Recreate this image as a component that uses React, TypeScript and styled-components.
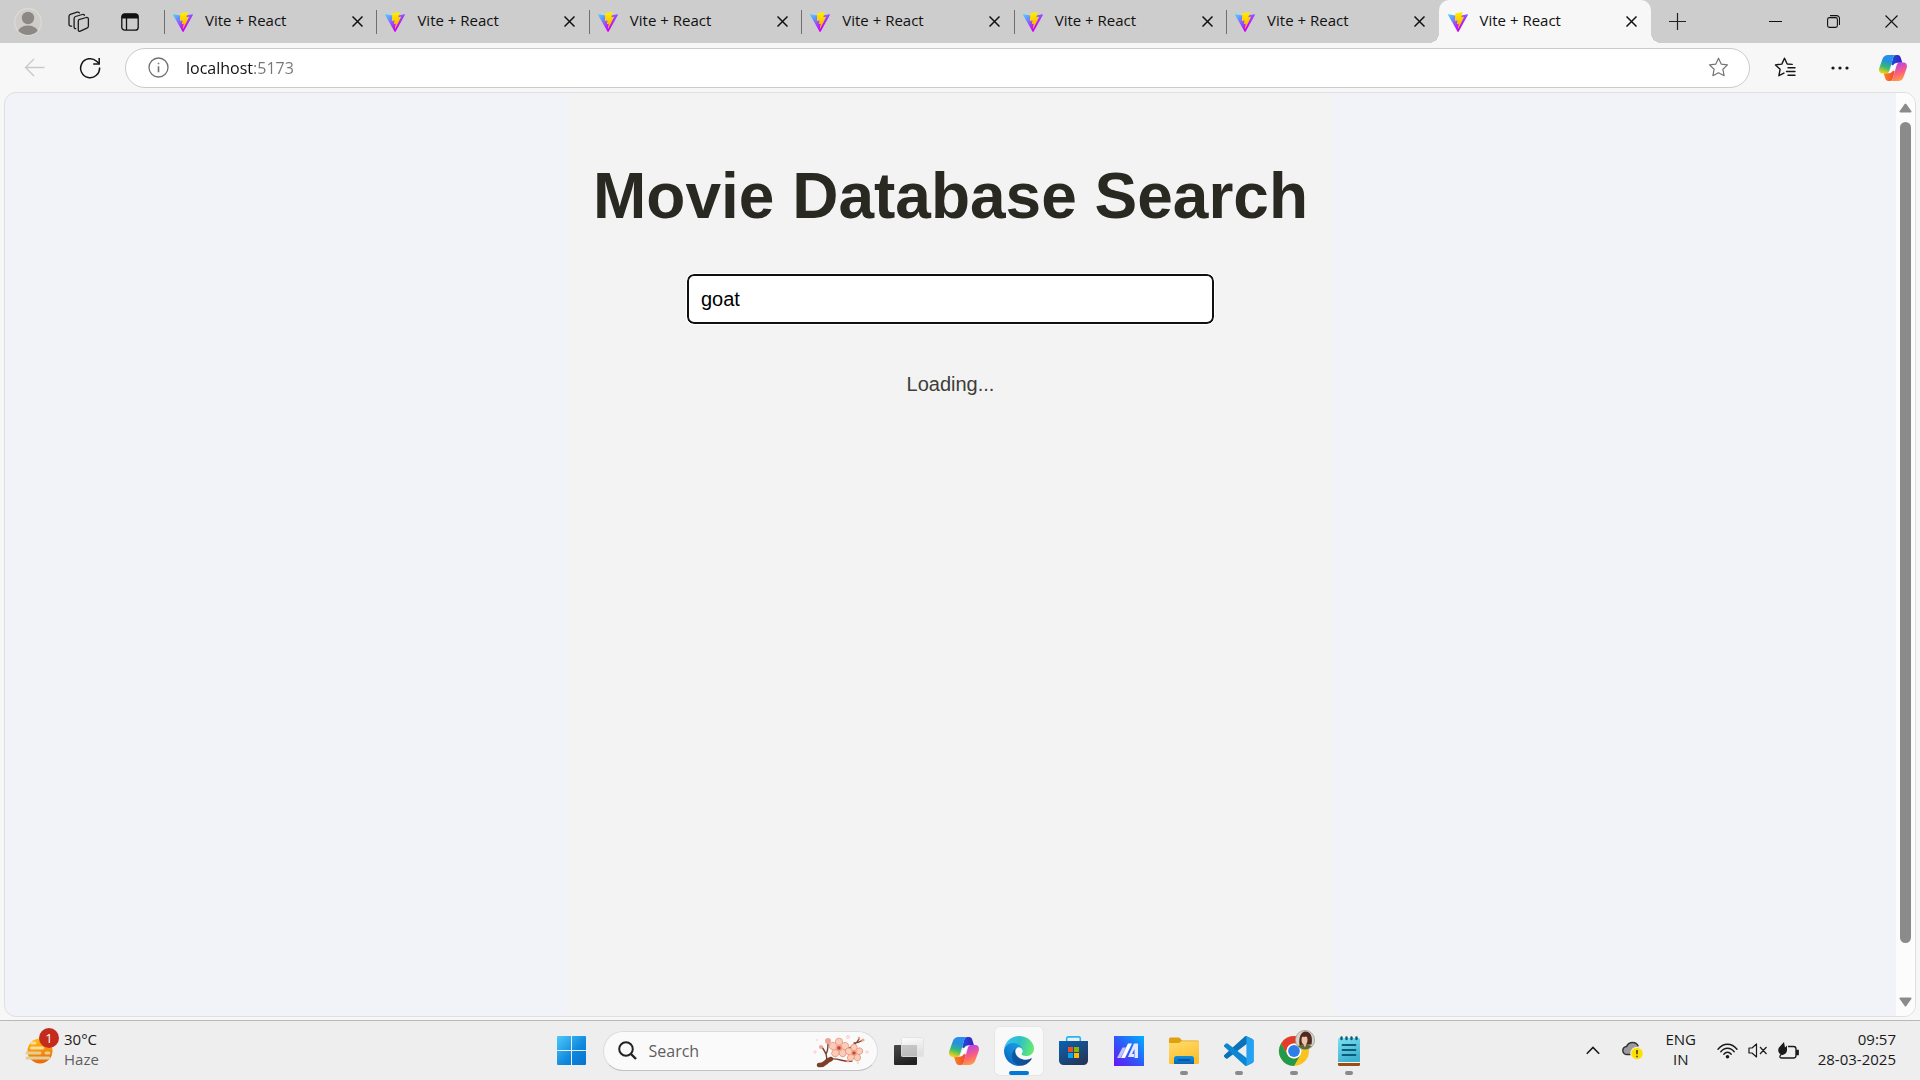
import React, { useState } from "react";
import styled, { createGlobalStyle, css } from "styled-components";

const uiFont = `"Open Sans", "Noto Sans", sans-serif`;
const pageFont = `"Liberation Sans", Arial, sans-serif`;

const GlobalStyle = createGlobalStyle`
  *, *::before, *::after { box-sizing: border-box; }
  html, body { margin: 0; }
  body { font-family: ${uiFont}; background: #f7f7f7; color: #1a1a1a; }
  button, input { font: inherit; color: inherit; }
`;

const Desktop = styled.div`
  display: flex;
  flex-direction: column;
  height: 100vh;
  overflow: hidden;
`;

const Browser = styled.section`
  flex: 1;
  min-height: 0;
  display: flex;
  flex-direction: column;
  padding-bottom: 3px;
  background: #f7f7f7;
`;

const PlainButton = styled.button`
  display: flex;
  align-items: center;
  justify-content: center;
  flex: none;
  padding: 0;
  border: 0;
  background: transparent;
`;

/* ---------- tab strip ---------- */

const TitleBar = styled.header`
  display: flex;
  height: 43px;
  flex: none;
  background: #cdcdcd;
`;

const TitleTools = styled.div`
  display: flex;
  align-items: center;
  width: 164px;
  padding-left: 2px;
  flex: none;
`;

const TitleTool = styled(PlainButton)`
  width: 51px;
  height: 43px;
`;

const TabStrip = styled.nav`
  display: flex;
  flex: 0 1 1487px;
  min-width: 0;
`;

const Tab = styled.div<{ $active?: boolean }>`
  flex: 1 1 0;
  min-width: 0;
  display: flex;
  align-items: center;
  position: relative;
  padding: 0 7px 0 9px;
  &::before {
    content: "";
    position: absolute;
    left: 0;
    top: 10px;
    width: 1px;
    height: 24px;
    background: #6f6f6f;
  }
  ${(p) =>
    p.$active &&
    css`
      background: #f7f7f7;
      border-radius: 10px 10px 0 0;
      &::before,
      &::after {
        content: "";
        position: absolute;
        top: auto;
        bottom: 0;
        width: 10px;
        height: 10px;
      }
      &::before {
        left: -10px;
        background: radial-gradient(circle at 0 0, #cdcdcd 10px, #f7f7f7 10px);
      }
      &::after {
        right: -10px;
        background: radial-gradient(circle at 100% 0, #cdcdcd 10px, #f7f7f7 10px);
      }
    `}
`;

const TabLink = styled.a`
  display: flex;
  align-items: center;
  gap: 12px;
  flex: 1;
  min-width: 0;
  color: #111;
  text-decoration: none;
  white-space: nowrap;
`;

const TabTitle = styled.span`
  padding-bottom: 4px;
  font-size: 15px;
  line-height: 20px;
`;

const TabClose = styled(PlainButton)`
  width: 24px;
  height: 24px;
`;

const NewTab = styled(PlainButton)`
  width: 52px;
  height: 42px;
`;

const WindowButtons = styled.div`
  display: flex;
  margin-left: auto;
`;

const WindowButton = styled(PlainButton)`
  width: 58px;
  height: 43px;
`;

/* ---------- toolbar ---------- */

const Toolbar = styled.div`
  display: flex;
  align-items: center;
  height: 49px;
  flex: none;
  padding: 0 0 0 7px;
`;

const ToolButton = styled(PlainButton)<{ $width?: number }>`
  width: ${(p) => p.$width ?? 55}px;
  height: 40px;
`;

const NavButtons = styled.div`
  display: flex;
  width: 118px;
  flex: none;
`;

const AddressBar = styled.label`
  flex: 1;
  display: flex;
  align-items: center;
  height: 40px;
  padding: 0 20px 0 22px;
  border: 1px solid #cbcbcb;
  border-radius: 20px;
  background: #fff;
`;

const AddressInput = styled.input`
  flex: 1;
  min-width: 0;
  margin-left: 17px;
  padding: 0;
  border: 0;
  outline: 0;
  font-size: 16px;
  line-height: 24px;
  color: transparent;
  background: linear-gradient(90deg, #111 67px, #767676 67px);
  background-clip: text;
  -webkit-background-clip: text;
`;

const ToolbarRight = styled.div`
  display: flex;
  width: 170px;
  flex: none;
  padding-left: 7px;
`;

/* ---------- page ---------- */

const Viewport = styled.div`
  flex: 1;
  min-height: 0;
  display: flex;
  margin: 0 4px;
  border: 1px solid #dfdfdf;
  border-radius: 12px;
  overflow: hidden;
  background: #f2f3f8;
`;

const Page = styled.main`
  flex: 1;
  display: flex;
  justify-content: center;
  font-family: ${pageFont};
`;

const Panel = styled.div`
  display: flex;
  flex-direction: column;
  align-items: center;
  padding: 68px 25px 0;
  background: #f3f3f3;
`;

const Title = styled.h1`
  margin: 0;
  font-size: 64px;
  line-height: 70px;
  font-weight: 700;
  color: #292922;
`;

const SearchField = styled.input`
  width: 527px;
  max-width: 100%;
  height: 50px;
  margin: 43px 0 45px;
  padding: 0 12px;
  border: 2px solid #101010;
  border-radius: 7px;
  outline: 1px solid #fff;
  background: #fff;
  color: #000;
  font-size: 20px;
`;

const Status = styled.p`
  margin: 0;
  font-size: 20px;
  line-height: 30px;
  color: #3d3d38;
`;

const Scrollbar = styled.div`
  display: flex;
  flex-direction: column;
  align-items: center;
  justify-content: space-between;
  width: 19px;
  padding: 10px 0 9px;
  background: #fcfcfc;
`;

const Thumb = styled.div`
  flex: 1;
  width: 11px;
  margin: 9px 0 54px;
  border-radius: 6px;
  background: #8b8b8b;
`;

/* ---------- taskbar ---------- */

const Taskbar = styled.footer`
  display: grid;
  grid-template-columns: 1fr auto 1fr;
  align-items: center;
  height: 60px;
  flex: none;
  border-top: 1px solid #b9b9b9;
  background: #eeeeee;
`;

const Weather = styled(PlainButton)`
  justify-self: start;
  gap: 11px;
  padding-left: 25px;
  text-align: left;
`;

const WeatherIcon = styled.span`
  position: relative;
  display: flex;
`;

const Badge = styled.span`
  position: absolute;
  top: -10px;
  left: 14px;
  width: 20px;
  height: 20px;
  border-radius: 50%;
  background: #c42b1c;
  color: #fff;
  font-size: 13px;
  line-height: 20px;
  text-align: center;
`;

const TwoLines = styled.span<{ $align?: string }>`
  display: flex;
  flex-direction: column;
  padding-bottom: 4px;
  font-size: 15px;
  line-height: 20px;
  text-align: ${(p) => p.$align ?? "left"};
  color: #1a1a1a;
`;

const Muted = styled.span`
  color: #5f5f5f;
`;

const Apps = styled.div`
  display: flex;
  align-items: center;
  gap: 7px;
`;

const AppButton = styled(PlainButton)<{ $active?: boolean; $running?: boolean }>`
  position: relative;
  width: 48px;
  height: 48px;
  border-radius: 5px;
  ${(p) =>
    p.$active &&
    css`
      background: #f9f9f9;
      box-shadow: 0 0 0 1px #e6e6e6;
    `}
  ${(p) =>
    (p.$active || p.$running) &&
    css`
      &::after {
        content: "";
        position: absolute;
        bottom: 0;
        left: 50%;
        width: ${p.$active ? 20 : 8}px;
        height: 4px;
        margin-left: ${p.$active ? -10 : -4}px;
        border-radius: 2px;
        background: ${p.$active ? "#0078d4" : "#8a8a8a"};
      }
    `}
`;

const TaskSearch = styled.label`
  display: flex;
  align-items: center;
  width: 275px;
  height: 40px;
  padding: 0 8px 0 14px;
  border: 1px solid #dcdcdc;
  border-bottom-color: #c2c2c2;
  border-radius: 20px;
  background: #fafafa;
`;

const TaskSearchInput = styled.input`
  flex: 1;
  min-width: 0;
  margin-left: 12px;
  padding: 0;
  border: 0;
  outline: 0;
  background: transparent;
  font-size: 16px;
  &::placeholder {
    color: #5e5e5e;
    opacity: 1;
  }
`;

const Tray = styled.div`
  justify-self: end;
  display: flex;
  align-items: center;
  padding-right: 24px;
`;

const TrayButton = styled(PlainButton)<{ $width: number }>`
  width: ${(p) => p.$width}px;
  height: 48px;
`;

const Quick = styled(PlainButton)`
  gap: 10px;
  margin: 0 19px 0 8px;
  height: 48px;
`;

/* ---------- icons ---------- */

const ViteLogo = () => (
  <svg width="20" height="20" viewBox="0 0 256 257">
    <defs>
      <linearGradient id="viteA" x1="-.828%" x2="57.636%" y1="7.652%" y2="78.411%">
        <stop offset="0" stopColor="#41D1FF" />
        <stop offset="1" stopColor="#C800FF" />
      </linearGradient>
      <linearGradient id="viteB" x1="43.376%" x2="50.316%" y1="2.242%" y2="89.03%">
        <stop offset="0" stopColor="#FFF000" />
        <stop offset="1" stopColor="#FFB000" />
      </linearGradient>
    </defs>
    <path fill="url(#viteA)" d="M255.153 37.938L134.897 252.976c-2.483 4.44-8.862 4.466-11.382.048L.875 37.958c-2.746-4.814 1.371-10.646 6.827-9.67l120.385 21.517a6.537 6.537 0 0 0 2.322-.004l117.867-21.483c5.438-.991 9.574 4.796 6.877 9.62Z" />
    <path fill="url(#viteB)" d="M185.432.063L96.44 17.501a3.268 3.268 0 0 0-2.634 3.014l-5.474 92.456a3.268 3.268 0 0 0 3.997 3.378l24.777-5.718c2.318-.535 4.413 1.507 3.936 3.838l-7.361 36.047c-.495 2.426 1.782 4.5 4.151 3.78l15.304-4.649c2.372-.72 4.652 1.36 4.15 3.788l-11.698 56.621c-.732 3.542 3.979 5.473 5.943 2.437l1.313-2.028l72.516-144.72c1.215-2.423-.88-5.186-3.54-4.672l-25.505 4.922c-2.396.462-4.435-1.77-3.759-4.114l16.646-57.705c.677-2.35-1.37-4.583-3.769-4.113Z" />
  </svg>
);

const ProfileIcon = () => (
  <svg width="28" height="28" viewBox="0 0 28 28">
    <clipPath id="profileClip"><circle cx="14" cy="14" r="13" /></clipPath>
    <circle cx="14" cy="14" r="13.3" fill="#cfccc9" stroke="#dedcd6" strokeWidth="1.2" />
    <g fill="#8c8885" clipPath="url(#profileClip)">
      <circle cx="14" cy="10" r="6.2" />
      <ellipse cx="14" cy="25" rx="10.5" ry="7.5" />
    </g>
  </svg>
);

const WorkspacesIcon = () => (
  <svg width="22" height="22" viewBox="0 0 22 22" fill="none" stroke="#1b1b1b" strokeWidth="1.3" strokeLinejoin="round" strokeLinecap="round">
    <path d="M11 8.6l7.3-2.1c1.2-.3 2.1.3 2.1 1.5v7c0 1-.5 1.8-1.5 2.2l-6.6 3c-1.2.4-2-.2-2-1.3V10.2c0-.8.2-1.4.7-1.6z" />
    <path d="M7.800 17.600c-1.100.1-1.700-.5-1.700-1.500V7.400c0-1 .5-1.600 1.400-1.900l6.800-2c1-.3 1.800 0 2.100.8" />
    <path d="M3.600 15.200C2 15.300 1 14.600 1 13.300V5.400c0-1 .5-1.700 1.400-2L9 1.200c1.200-.3 2 0 2.400.8" />
  </svg>
);

const TabActionsIcon = () => (
  <svg width="18" height="18" viewBox="0 0 18 18">
    <rect x=".8" y=".8" width="16.4" height="16.4" rx="3" fill="none" stroke="#111" strokeWidth="1.3" />
    <path d="M.8 5.600V3.800a3 3 0 0 1 3-3h10.400a3 3 0 0 1 3 3v1.800z" fill="#111" />
    <path d="M5.500 5v12" stroke="#111" strokeWidth="1.3" />
  </svg>
);

const CrossIcon = ({ size = 11, weight = 1.5 }: { size?: number; weight?: number }) => (
  <svg width={size} height={size} viewBox={`0 0 ${size} ${size}`} stroke="#111" strokeWidth={weight}>
    <path d={`M.5 .5L${size - 0.5} ${size - 0.5}M${size - 0.5} .5L.5 ${size - 0.5}`} />
  </svg>
);

const PlusIcon = () => (
  <svg width="17" height="17" viewBox="0 0 17 17" stroke="#222" strokeWidth="1.2"><path d="M8.500 0v17M0 8.500h17" /></svg>
);

const MinimizeIcon = () => (
  <svg width="13" height="13" viewBox="0 0 13 13" stroke="#111"><path d="M0 6.500h13" /></svg>
);

const RestoreIcon = () => (
  <svg width="13" height="13" viewBox="0 0 13 13" fill="none" stroke="#111" strokeWidth="1.1">
    <rect x=".6" y="2.6" width="9.8" height="9.8" rx="1.8" />
    <path d="M3 .6h6.500a3 3 0 0 1 3 3V10" />
  </svg>
);

const BackIcon = () => (
  <svg width="21" height="19" viewBox="0 0 21 19" fill="none" stroke="#c9c9c9" strokeWidth="1.4"><path d="M10 1L1.500 9.500 10 18M1.500 9.500H20.500" /></svg>
);

const ReloadIcon = () => (
  <svg width="22" height="22" viewBox="0 0 22 22" fill="none" stroke="#151515" strokeWidth="1.5">
    <path d="M20.600 10.500A9.500 9.500 0 1 1 17.600 4.200L20 6.400" />
    <path d="M20.200 1v6h-6" />
  </svg>
);

const InfoIcon = () => (
  <svg width="21" height="21" viewBox="0 0 21 21" fill="none" stroke="#717171" strokeWidth="1.3">
    <circle cx="10.5" cy="10.5" r="9.5" />
    <path d="M10.500 9.300v6" strokeWidth="1.6" />
    <circle cx="10.5" cy="6.5" r=".5" strokeWidth="1" />
  </svg>
);

const starPath = "M10.500 1.200l2.700 5.900 6.300.8-4.600 4.400 1.200 6.400-5.600-3-5.600 3 1.200-6.400L1.500 7.900l6.300-.8z";

const StarIcon = () => (
  <svg width="21" height="21" viewBox="0 0 21 21" fill="none" stroke="#757575" strokeWidth="1.2" strokeLinejoin="round"><path d={starPath} /></svg>
);

const FavoritesIcon = () => (
  <svg width="22" height="21" viewBox="0 0 22 21" fill="none" stroke="#161616" strokeWidth="1.4" strokeLinejoin="round" strokeLinecap="round">
    <path d="M18.200 7.400l-5-.4-2.700-5.800-2.700 5.900-6.300.8 4.600 4.400-1.200 6.400 5-2.600" />
    <path d="M14 10.700h7M12.500 14.500H21M14 18.200h7" />
  </svg>
);

const DotsIcon = () => (
  <svg width="18" height="4" viewBox="0 0 18 4" fill="#161616"><circle cx="2" cy="2" r="1.6" /><circle cx="9" cy="2" r="1.6" /><circle cx="16" cy="2" r="1.6" /></svg>
);

const CopilotIcon = ({ id, size = 30 }: { id: string; size?: number }) => {
  const ribbon = "M9 0H17C15.200 0 14.400 1.600 13.800 4L10.600 15C9.900 17.500 9 18.500 7 18.500H3.500C.5 18.500-.5 16 .3 13L3.300 4.500C4.300 1.500 6 0 9 0Z";
  const fold = "M17 0H18.500C20.700 0 21.500 1.500 22.100 3.700L23.300 7.700H18.500C16.500 7.700 15 8.600 14 10.500L12.200 9.500 13.800 4C14.400 1.600 15.200 0 17 0Z";
  return (
    <svg width={size} height={size} viewBox="0 -1 28 28">
      <defs>
        <linearGradient id={`${id}a`} x1=".6" y1="0" x2=".3" y2="1">
          <stop offset="0" stopColor="#2b8cf5" /><stop offset=".35" stopColor="#2492d8" /><stop offset=".65" stopColor="#34b978" /><stop offset="1" stopColor="#f5d30e" />
        </linearGradient>
        <linearGradient id={`${id}b`} x1=".3" y1="0" x2=".6" y2="1">
          <stop offset="0" stopColor="#ffa63a" /><stop offset=".45" stopColor="#fb5f7e" /><stop offset="1" stopColor="#b640f0" />
        </linearGradient>
        <linearGradient id={`${id}c`}><stop offset="0" stopColor="#1b4fd8" /><stop offset="1" stopColor="#3a1fc0" /></linearGradient>
        <linearGradient id={`${id}d`}><stop offset="0" stopColor="#f04a2c" /><stop offset="1" stopColor="#f98321" /></linearGradient>
      </defs>
      <path d="M15.500 8L17.500 8.500 12.500 18.500 10 18z" fill="#fff" />
      <path d={fold} fill={`url(#${id}c)`} />
      <path d={fold} fill={`url(#${id}d)`} transform="rotate(180 14 13)" />
      <path d={ribbon} fill={`url(#${id}a)`} />
      <path d={ribbon} fill={`url(#${id}b)`} transform="rotate(180 14 13)" />
    </svg>
  );
};

const ScrollArrow = ({ down }: { down?: boolean }) => (
  <svg width="13" height="10" viewBox="0 0 13 10" fill="#8b8b8b">
    <path d={down ? "M1.500 .5h10c1 0 1.300.8.8 1.500L7.300 9c-.5.7-1.100.7-1.600 0L.7 2C.2 1.300.5.5 1.500.5z" : "M1.500 9.500h10c1 0 1.300-.8.8-1.500L7.300 1c-.5-.7-1.100-.7-1.600 0L.7 8c-.5.7-.2 1.500.8 1.500z"} />
  </svg>
);

const HazeIcon = () => (
  <svg width="28" height="26" viewBox="0 0 28 26">
    <defs><linearGradient id="sun" x2=".2" y2="1"><stop offset="0" stopColor="#ffc414" /><stop offset="1" stopColor="#ee6a0a" /></linearGradient></defs>
    <circle cx="15" cy="13" r="12.5" fill="url(#sun)" />
    <g stroke="#f9dc97" strokeWidth="3" strokeLinecap="round">
      <path d="M7 5h3M6.500 10h11" /><path d="M2 15h13M21 15h3M2 20h22" stroke="#e2cf97" />
    </g>
  </svg>
);

const WindowsIcon = () => (
  <svg width="29" height="29" viewBox="0 0 29 29">
    <defs><linearGradient id="win" gradientUnits="userSpaceOnUse" x1="0" y1="0" x2="29" y2="29"><stop offset="0" stopColor="#4cc9fb" /><stop offset=".6" stopColor="#0f86dc" /><stop offset="1" stopColor="#0672d0" /></linearGradient></defs>
    <path fill="url(#win)" d="M1 0h13v14H0V1a1 1 0 0 1 1-1zM15 0h13a1 1 0 0 1 1 1v13H15zM0 15h14v14H1a1 1 0 0 1-1-1zM15 15h14v13a1 1 0 0 1-1 1H15z" />
  </svg>
);

const MagnifierIcon = () => (
  <svg width="19" height="19" viewBox="0 0 19 19" fill="none" stroke="#222" strokeWidth="2"><circle cx="8" cy="8" r="6.8" /><path d="M13 13l5 5" strokeWidth="2.4" /></svg>
);

const Flower = ({ x, y, r }: { x: number; y: number; r: number }) => (
  <g transform={`translate(${x} ${y})`}>
    {[0, 72, 144, 216, 288].map((a) => (
      <ellipse key={a} cx="0" cy={-r * 0.6} rx={r * 0.36} ry={r * 0.4} fill="#fbcdb8" stroke="#e08f78" strokeWidth=".7" transform={`rotate(${a})`} />
    ))}
    <circle r={r * 0.34} fill="#f2a08a" />
    <circle r={r * 0.18} fill="#b8453a" />
  </g>
);

const BlossomIcon = () => (
  <svg width="56" height="34" viewBox="0 0 56 34">
    <g fill="none" stroke="#7c4028" strokeLinecap="round">
      <path d="M6 31c6 1 6-4 12-6" strokeWidth="4.5" />
      <path d="M13 28c2-5 0-9-4-15M13 20c2-3 2-6 2-11M18 25c9-1 13 4 21 2M34 15c5-2 9-4 12-10M41 9c3 0 6-1 9-3" strokeWidth="1.4" />
    </g>
    <g fill="#fbd9d5"><circle cx="2" cy="18" r="1.7" /><circle cx="35" cy="3" r="2" /><circle cx="54" cy="18" r="1.8" /><circle cx="4" cy="6" r="1.1" /><circle cx="45" cy="29" r="1.2" /></g>
    <Flower x={26} y={14} r={10} />
    <Flower x={41} y={19} r={9} />
    <g fill="#f0a497"><circle cx="15" cy="7" r="3" /><circle cx="8" cy="13" r="2" /><circle cx="50" cy="6" r="1.6" /><circle cx="46" cy="4" r="1.3" /><circle cx="35" cy="27" r="1.5" /></g>
  </svg>
);

const TaskViewIcon = () => (
  <svg width="30" height="28" viewBox="0 0 30 28">
    <defs>
      <linearGradient id="tvA" y2="1" x2=".4"><stop offset="0" stopColor="#4a4a48" /><stop offset="1" stopColor="#222" /></linearGradient>
      <linearGradient id="tvB" x2=".3" y2="1"><stop offset="0" stopColor="#fff" stopOpacity=".95" /><stop offset="1" stopColor="#ddd" stopOpacity=".8" /></linearGradient>
    </defs>
    <rect x="0" y="8" width="23" height="20" rx="1" fill="url(#tvA)" />
    <rect x="7.5" y=".5" width="22" height="19" rx="1" fill="url(#tvB)" stroke="#e2e2e2" />
    <rect x="7.5" y="8" width="15.5" height="11.5" fill="#bdbdbd" opacity=".7" />
  </svg>
);

const EdgeIcon = () => (
  <svg width="30" height="30" viewBox="0 0 256 256">
    <defs>
      <linearGradient id="edA" gradientUnits="userSpaceOnUse" x1="63" y1="177" x2="241" y2="177"><stop offset="0" stopColor="#0c59a4" /><stop offset="1" stopColor="#114a8b" /></linearGradient>
      <linearGradient id="edB" gradientUnits="userSpaceOnUse" x1="157" y1="95" x2="46" y2="220"><stop offset="0" stopColor="#1b9de2" /><stop offset=".5" stopColor="#1488d6" /><stop offset="1" stopColor="#0a6cc4" /></linearGradient>
      <linearGradient id="edC" gradientUnits="userSpaceOnUse" x1="20" y1="60" x2="250" y2="130"><stop offset="0" stopColor="#35c1f1" /><stop offset=".45" stopColor="#2dc0c8" /><stop offset="1" stopColor="#66eb6e" /></linearGradient>
    </defs>
    <g transform="translate(-4.63 -4.92)">
      <path fill="url(#edA)" d="M235.680 195.460a93.730 93.730 0 0 1-10.540 4.710 101.870 101.870 0 0 1-35.900 6.460c-47.320 0-88.540-32.550-88.540-74.320A31.480 31.480 0 0 1 117.130 105c-42.800 1.800-53.800 46.400-53.800 72.530 0 73.880 68.090 81.370 82.760 81.370 7.910 0 19.840-2.300 27-4.560l1.310-.44a128.340 128.340 0 0 0 66.600-52.800 4 4 0 0 0-5.320-5.640Z" />
      <path fill="url(#edB)" d="M110.340 246.340A79.200 79.200 0 0 1 87.600 225a80.720 80.720 0 0 1 29.530-120c3.120-1.470 8.450-4.130 15.540-4a32.350 32.350 0 0 1 25.690 13 31.880 31.880 0 0 1 6.360 18.660c0-.21 24.460-79.600-80-79.600-43.900 0-80 41.660-80 78.210a130.150 130.150 0 0 0 12.110 56 128 128 0 0 0 156.380 67.110 75.550 75.550 0 0 1-62.780-8Z" />
      <path fill="url(#edC)" d="M156.940 153.780c-.81 1.050-3.300 2.500-3.300 5.660 0 2.610 1.700 5.120 4.720 7.230 14.380 10 41.490 8.680 41.560 8.680a59.560 59.560 0 0 0 30.270-8.350 61.380 61.380 0 0 0 30.430-52.880c.26-22.410-8-37.310-11.340-43.910C228.090 28.760 182.350 4.920 132.610 4.920a128 128 0 0 0-128 126.200c.48-36.540 36.800-66.050 80-66.050 3.500 0 23.460.34 42 10.070 16.340 8.580 24.900 18.940 30.850 29.210 6.180 10.670 7.280 24.150 7.280 29.520s-2.740 13.330-7.800 19.910Z" />
    </g>
  </svg>
);

const StoreIcon = () => (
  <svg width="29" height="29" viewBox="0 0 29 29">
    <defs><linearGradient id="store" x2=".7" y2="1"><stop offset="0" stopColor="#0a63b4" /><stop offset="1" stopColor="#24365c" /></linearGradient></defs>
    <path d="M7.700 7V2.500C7.700 1.500 8.300.9 9.300.9h10.400c1 0 1.600.6 1.600 1.600V7" fill="none" stroke="#23b6f2" strokeWidth="1.6" />
    <path d="M0 5h29v19.500A4.500 4.500 0 0 1 24.500 29h-20A4.500 4.500 0 0 1 0 24.500z" fill="url(#store)" />
    <path fill="#f25022" d="M9 11h5v5H9z" /><path fill="#7fba00" d="M15 11h5v5h-5z" /><path fill="#00a4ef" d="M9 17h5v5H9z" /><path fill="#ffb900" d="M15 17h5v5h-5z" />
  </svg>
);

const AsusIcon = () => (
  <svg width="30" height="30" viewBox="0 0 30 30">
    <defs><linearGradient id="asus" x1="0" y1="1" x2="1" y2="0"><stop offset="0" stopColor="#6a14f2" /><stop offset=".5" stopColor="#2c5cf8" /><stop offset="1" stopColor="#00b0ff" /></linearGradient></defs>
    <path fill="url(#asus)" d="M0 0h30v30H0z" />
    <path d="M8.500 11.500H12L6.500 22H3z" fill="#d9dcff" opacity=".85" />
    <path d="M14 7.500h4L11 22H7z" fill="#fff" />
    <path d="M20 7.500h4V22h-3.500V13l-2.500 5h2v3h-6z" fill="#e4e8ff" />
  </svg>
);

const FolderIcon = () => (
  <svg width="30" height="28" viewBox="0 0 30 28">
    <defs><linearGradient id="folder" x2=".4" y2="1"><stop offset="0" stopColor="#ffdc6b" /><stop offset="1" stopColor="#fcc02e" /></linearGradient><linearGradient id="folderTray" y2="1" x2="0"><stop offset="0" stopColor="#128ee0" /><stop offset="1" stopColor="#0a67b8" /></linearGradient></defs>
    <path d="M0 2a1.500 1.500 0 0 1 1.500-1.500h8c.8 0 1.300.3 1.800.9L13 3.500h15.500A1.500 1.500 0 0 1 30 5v4H0z" fill="#dfa012" />
    <path d="M0 6h9.500c.7 0 1.200-.2 1.700-.7l1-1H29a1 1 0 0 1 1 1V26a1 1 0 0 1-1 1H1a1 1 0 0 1-1-1z" fill="url(#folder)" />
    <path d="M5 27v-5.500A2.500 2.500 0 0 1 7.500 19h15a2.500 2.500 0 0 1 2.500 2.500V27z" fill="url(#folderTray)" />
    <path d="M9 23h12" stroke="#074a8c" strokeWidth="1.4" />
  </svg>
);

const CodeIcon = () => (
  <svg width="30" height="30" viewBox="0 0 256 254">
    <path fill="#0a72b8" d="M246.135 26.873L193.431 1.497a15.938 15.938 0 0 0-18.180 3.090L2.669 161.893a10.655 10.655 0 0 0 .01 15.756l14.093 12.812a10.655 10.655 0 0 0 13.610.605L238.210 33.396z" />
    <path fill="#0a86d2" d="m246.135 226.816-52.704 25.375a15.940 15.940 0 0 1-18.180-3.090L2.669 91.797a10.655 10.655 0 0 1 .01-15.757l14.093-12.812a10.655 10.655 0 0 1 13.610-.605L238.210 220.294z" />
    <path fill="#25a1f1" d="M193.428 252.134a15.947 15.947 0 0 1-18.180-3.092c5.900 5.900 15.988 1.722 15.988-6.622V11.273c0-8.344-10.088-12.523-15.988-6.623a15.947 15.947 0 0 1 18.180-3.092l52.697 25.343A15.986 15.986 0 0 1 255.200 41.310v171.074a15.986 15.986 0 0 1-9.075 14.409z" />
  </svg>
);

/* The wheel is centred in the button; the account picture hangs over its corner. */
const ChromeIcon = () => (
  <svg width="42" height="42" viewBox="-21 -21 42 42">
    <defs><clipPath id="avatar"><circle cx="11" cy="-11" r="9.3" /></clipPath></defs>
    <circle r="15" fill="#fcc31e" />
    <path fill="#e33b2e" d="M-13 -7.500A15 15 0 0 1 13 -7.500H0A7.500 7.500 0 0 0 -6.500 3.750z" />
    <path fill="#229a4c" d="M-13 -7.500A15 15 0 0 0 0 15L6.500 3.750A7.500 7.500 0 0 1 -6.500 3.750z" />
    <circle r="7.5" fill="#fff" />
    <circle r="5.9" fill="#2f7de8" />
    <circle cx="11" cy="-11" r="9.6" fill="#d8d2c8" stroke="#9a9a90" strokeWidth=".8" />
    <g clipPath="url(#avatar)">
      <path d="M5.500 -6c-1-7 1-13.500 6-13.500s7.500 5 6 13z" fill="#4e2a20" />
      <ellipse cx="10.5" cy="-11" rx="3" ry="4.2" fill="#efc3a8" />
      <path d="M7 -15c2-2 5-2 7 0l-4 1z" fill="#4e2a20" />
      <path d="M2 0c0-6 5-6.500 9-6.500S20-5 20 0z" fill="#5d6b2c" />
      <path d="M9 -7.500h3.500l-1.500 4z" fill="#efc3a8" />
    </g>
  </svg>
);

const NotepadIcon = () => (
  <svg width="22" height="30" viewBox="0 0 22 30">
    <defs><linearGradient id="note" x2=".4" y2="1"><stop offset="0" stopColor="#7fe0f2" /><stop offset="1" stopColor="#3fb0d0" /></linearGradient></defs>
    <path d="M0 24h22v4.500a1.500 1.500 0 0 1-1.500 1.500h-19A1.500 1.500 0 0 1 0 28.500z" fill="#9a4d14" />
    <path d="M0 24h22v3H0z" fill="#f4f4f4" />
    <path d="M0 3.500A1.500 1.500 0 0 1 1.500 2h19A1.500 1.500 0 0 1 22 3.500V26H0z" fill="url(#note)" />
    <g stroke="#0c5c78" strokeLinecap="round"><path d="M3.500 1.500v1.500M8.500 1.500v1.500M13.500 1.500v1.500M18.500 1.500v1.500" strokeWidth="2.4" /><path d="M4.500 9h13M4.500 14h13M4.500 19h13" strokeWidth="1.8" /></g>
  </svg>
);

const ChevronIcon = () => (
  <svg width="14" height="9" viewBox="0 0 14 9" fill="none" stroke="#1a1a1a" strokeWidth="1.6"><path d="M.8 7.700L7 1.500l6.200 6.200" /></svg>
);

const CloudIcon = () => (
  <svg width="22" height="20" viewBox="0 0 22 20">
    <path d="M5 13.500a4 4 0 0 1-.4-8C5.500 3 8 1.400 10.500 1.400c3.500 0 5.600 2.200 6.100 4.800 2 .3 3 1.800 3 3.600 0 2-1.600 3.700-3.700 3.700z" fill="#9b9b9b" />
    <path d="M9 13.500H5a4 4 0 0 1-.4-8C5.500 3 8 1.400 10.500 1.400c3 0 4.900 1.600 5.800 3.800" fill="none" stroke="#333" strokeWidth="1.5" />
    <circle cx="15" cy="12.5" r="6.8" fill="#eee" /><circle cx="15" cy="12.5" r="5.8" fill="#ffe100" />
    <path d="M15 9v4.300M15 14.700v1.500" stroke="#333" strokeWidth="1.5" />
  </svg>
);

const WifiIcon = () => (
  <svg width="21" height="16" viewBox="0 0 21 16" fill="none" stroke="#1a1a1a" strokeWidth="1.4" strokeLinecap="round">
    <path d="M1 6.200C6.300-.4 14.700-.4 20 6.200M3.800 8.700c3.700-4.700 9.700-4.700 13.400 0M6.800 11.200c2.100-2.600 5.300-2.600 7.400 0" />
    <circle cx="10.5" cy="13.7" r="1.8" fill="#1a1a1a" stroke="none" />
  </svg>
);

const MuteIcon = () => (
  <svg width="20" height="15" viewBox="0 0 20 15" fill="none" stroke="#1a1a1a" strokeWidth="1.2" strokeLinejoin="round">
    <path d="M1 5h3l4.500-4v13L4 10H1zM12 4l6.500 7M18.500 4L12 11" />
  </svg>
);

const BatteryIcon = () => (
  <svg width="21" height="18" viewBox="0 0 21 18" fill="none" stroke="#1a1a1a" strokeWidth="1.3">
    <path d="M10 4.500h5.500A2.500 2.500 0 0 1 18 7v6.500a2.500 2.500 0 0 1-2.500 2.500H4a2.500 2.500 0 0 1-2.500-1.500" />
    <path d="M18.500 8.500h1.700v4h-1.700z" fill="#1a1a1a" />
    <path d="M6 0L1 5.500C-.5 8 .3 11 2.500 12L1 14.500h1.500L5 10.500 3.500 13C7 13 9 10.500 9 8V3.500L7 5.500z" fill="#1a1a1a" stroke="none" />
  </svg>
);

/* ---------- app ---------- */

const tabs = [1, 2, 3, 4, 5, 6, 7];

export default function App() {
  const [address, setAddress] = useState("localhost:5173");
  const [query, setQuery] = useState("goat");

  return (
    <Desktop>
      <GlobalStyle />
      <Browser>
        <TitleBar>
          <TitleTools>
            <TitleTool aria-label="Profile"><ProfileIcon /></TitleTool>
            <TitleTool aria-label="Workspaces"><WorkspacesIcon /></TitleTool>
            <TitleTool aria-label="Tab actions"><TabActionsIcon /></TitleTool>
          </TitleTools>
          <TabStrip aria-label="Tabs">
            {tabs.map((tab) => (
              <Tab key={tab} $active={tab === tabs.length}>
                <TabLink href="#"><ViteLogo /><TabTitle>Vite + React</TabTitle></TabLink>
                <TabClose aria-label="Close tab"><CrossIcon /></TabClose>
              </Tab>
            ))}
          </TabStrip>
          <NewTab aria-label="New tab"><PlusIcon /></NewTab>
          <WindowButtons>
            <WindowButton aria-label="Minimize"><MinimizeIcon /></WindowButton>
            <WindowButton aria-label="Restore"><RestoreIcon /></WindowButton>
            <WindowButton aria-label="Close"><CrossIcon size={13} weight={1.1} /></WindowButton>
          </WindowButtons>
        </TitleBar>

        <Toolbar>
          <NavButtons>
            <ToolButton aria-label="Back" disabled><BackIcon /></ToolButton>
            <ToolButton aria-label="Refresh"><ReloadIcon /></ToolButton>
          </NavButtons>
          <AddressBar>
            <InfoIcon />
            <AddressInput aria-label="Address" value={address} onChange={(e) => setAddress(e.target.value)} />
            <PlainButton aria-label="Add to favorites"><StarIcon /></PlainButton>
          </AddressBar>
          <ToolbarRight>
            <ToolButton aria-label="Favorites"><FavoritesIcon /></ToolButton>
            <ToolButton aria-label="Settings and more"><DotsIcon /></ToolButton>
            <ToolButton $width={52} aria-label="Copilot"><CopilotIcon id="bar" size={28} /></ToolButton>
          </ToolbarRight>
        </Toolbar>

        <Viewport>
          <Page>
            <Panel>
              <Title>Movie Database Search</Title>
              <SearchField aria-label="Search movies" value={query} onChange={(e) => setQuery(e.target.value)} />
              <Status role="status">Loading...</Status>
            </Panel>
          </Page>
          <Scrollbar aria-hidden="true">
            <ScrollArrow />
            <Thumb />
            <ScrollArrow down />
          </Scrollbar>
        </Viewport>
      </Browser>

      <Taskbar>
        <Weather>
          <WeatherIcon><HazeIcon /><Badge>1</Badge></WeatherIcon>
          <TwoLines><span>30°C</span><Muted>Haze</Muted></TwoLines>
        </Weather>
        <Apps>
          <AppButton aria-label="Start"><WindowsIcon /></AppButton>
          <TaskSearch>
            <MagnifierIcon />
            <TaskSearchInput type="text" aria-label="Search" placeholder="Search" />
            <BlossomIcon />
          </TaskSearch>
          <AppButton aria-label="Task view"><TaskViewIcon /></AppButton>
          <AppButton aria-label="Copilot"><CopilotIcon id="task" size={30} /></AppButton>
          <AppButton aria-label="Edge" $active><EdgeIcon /></AppButton>
          <AppButton aria-label="Store"><StoreIcon /></AppButton>
          <AppButton aria-label="MyASUS"><AsusIcon /></AppButton>
          <AppButton aria-label="File Explorer" $running><FolderIcon /></AppButton>
          <AppButton aria-label="Visual Studio Code" $running><CodeIcon /></AppButton>
          <AppButton aria-label="Chrome" $running><ChromeIcon /></AppButton>
          <AppButton aria-label="Notepad" $running><NotepadIcon /></AppButton>
        </Apps>
        <Tray>
          <TrayButton $width={40} aria-label="Hidden icons"><ChevronIcon /></TrayButton>
          <TrayButton $width={40} aria-label="OneDrive"><CloudIcon /></TrayButton>
          <TrayButton $width={56}><TwoLines $align="center"><span>ENG</span><span>IN</span></TwoLines></TrayButton>
          <Quick aria-label="Network, sound and battery"><WifiIcon /><MuteIcon /><BatteryIcon /></Quick>
          <PlainButton><TwoLines $align="right"><span>09:57</span><span>28-03-2025</span></TwoLines></PlainButton>
        </Tray>
      </Taskbar>
    </Desktop>
  );
}
